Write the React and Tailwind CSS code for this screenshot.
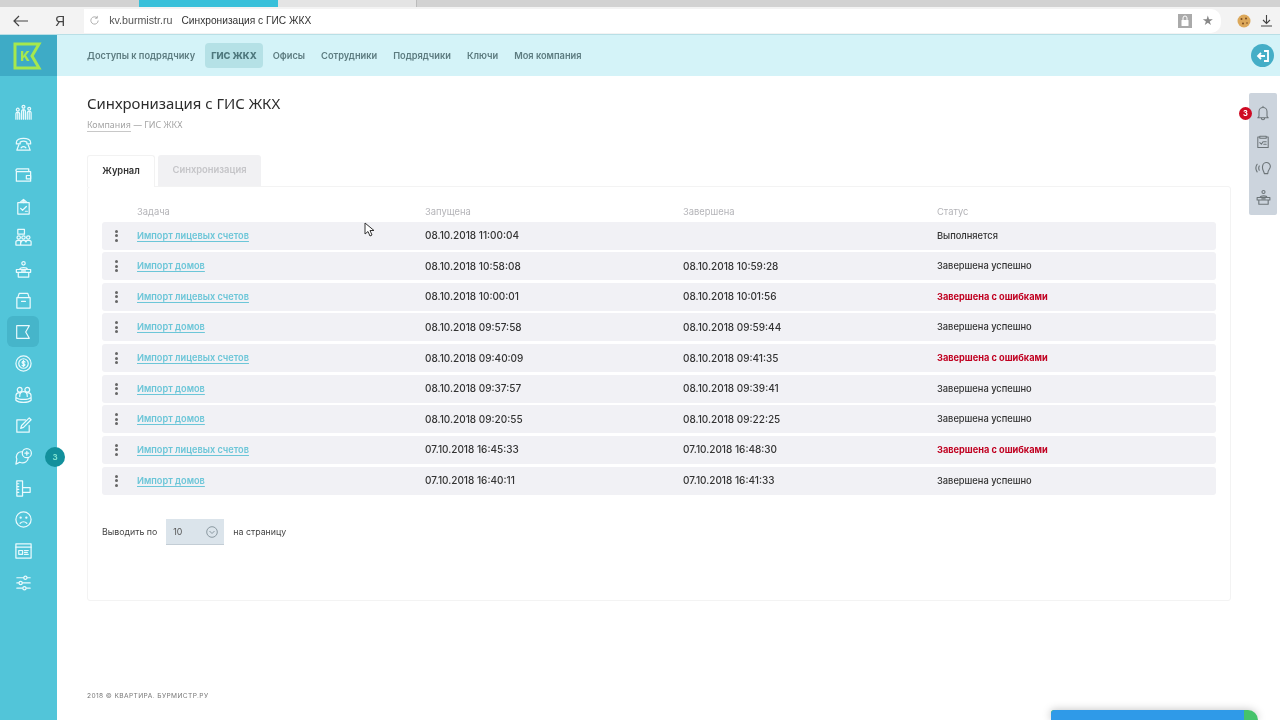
import React from "react";

const nav = ["Доступы к подрядчику", "ГИС ЖКХ", "Офисы", "Сотрудники", "Подрядчики", "Ключи", "Моя компания"];

const rows = [
  ["Импорт лицевых счетов", "08.10.2018 11:00:04", "", "Выполняется", 0],
  ["Импорт домов", "08.10.2018 10:58:08", "08.10.2018 10:59:28", "Завершена успешно", 0],
  ["Импорт лицевых счетов", "08.10.2018 10:00:01", "08.10.2018 10:01:56", "Завершена с ошибками", 1],
  ["Импорт домов", "08.10.2018 09:57:58", "08.10.2018 09:59:44", "Завершена успешно", 0],
  ["Импорт лицевых счетов", "08.10.2018 09:40:09", "08.10.2018 09:41:35", "Завершена с ошибками", 1],
  ["Импорт домов", "08.10.2018 09:37:57", "08.10.2018 09:39:41", "Завершена успешно", 0],
  ["Импорт домов", "08.10.2018 09:20:55", "08.10.2018 09:22:25", "Завершена успешно", 0],
  ["Импорт лицевых счетов", "07.10.2018 16:45:33", "07.10.2018 16:48:30", "Завершена с ошибками", 1],
  ["Импорт домов", "07.10.2018 16:40:11", "07.10.2018 16:41:33", "Завершена успешно", 0],
];

function Ico({ children, size = 20, className = "" }) {
  return (
    <svg width={size} height={size} viewBox="0 0 20 20" fill="none" stroke="currentColor" strokeWidth="1.3" strokeLinecap="round" strokeLinejoin="round" className={className}>
      {children}
    </svg>
  );
}

const sideIcons = [
  <><circle cx="4" cy="7" r="1.5"/><circle cx="10" cy="4" r="1.5"/><circle cx="16" cy="6" r="1.5"/><path d="M2 17v-5.5a2 2 0 0 1 4 0V17M8 17v-8a2 2 0 0 1 4 0v8M14 17v-6.500a2 2 0 0 1 4 0V17M4 10v7M10 8v9M16 9v8"/></>,
  <><path d="M2.500 9c0-6 15-6 15 0v1.500h-4V8.500c-2-1-5-1-7 0v2h-4z"/><path d="M5 11.500 3 17h14l-2-5.500M7.500 14.500c1.500-1.500 3.500-1.500 5 0"/></>,
  <><path d="M4 3h11.500v3M2.500 5.500A1.500 1.500 0 0 1 4 3M2.500 5.500V16h15V6h-15"/><rect x="13" y="10" width="4.500" height="3.500"/></>,
  <><path d="M6 6 10 2.500 14 6M4 6h12v12H4zM7 12l2 2 4-4M12 15h2"/><circle cx="10" cy="5" r=".8"/></>,
  <><rect x="4" y="1.500" width="7" height="5"/><circle cx="5" cy="10" r="1.800"/><circle cx="10" cy="10" r="1.800"/><circle cx="15" cy="10" r="1.800"/><path d="M2 18v-3.500c0-2 6-2 6 0M7 18v-3.500c0-2 6-2 6 0M12 14.500c0-2 6-2 6 0V18M2 18h16"/></>,
  <><circle cx="10" cy="3.500" r="1.800"/><path d="M6 10c0-2.500 8-2.500 8 0M2.500 10h15v3h-15zM4.500 13v5h11v-5M8 11.500h4"/></>,
  <><path d="M5.500 2.500h9l1.500 4.500H4zM3 7h14v11H3zM8 11h4"/></>,
  null,
  <><circle cx="10" cy="10" r="8"/><circle cx="10" cy="10" r="5"/><path d="M11.500 8.500c-.5-1-3-1-3 .5s3 .8 3 2.300-2.500 1.500-3 .5M10 6.800v6.400"/></>,
  <><circle cx="6" cy="5" r="2.500"/><circle cx="14" cy="5" r="2.500"/><path d="M2 12c0-3 1-4 4-4M18 12c0-3-1-4-4-4M6 12c0-3 1-5 4-5s4 2 4 5M2 13c3 3 13 3 16 0v3c-3 3-13 3-16 0z"/></>,
  <><path d="M16 10v7H3V4h9M7 13l1-3 8-8 2 2-8 8z"/></>,
  <><path d="M8 5C3 5 1.500 10 3 13l-1 5 4-2c5 2 9-1 9-5"/><circle cx="13.500" cy="6.500" r="4.800"/><path d="M13.500 4.500v4M11.500 6.500h4"/></>,
  <><path d="M3 2h6v16H3zM9 9h8v5H9zM3 5h2M3 8h2M3 11h2M3 14h2"/></>,
  <><circle cx="10" cy="10" r="8"/><circle cx="7" cy="8" r=".6"/><circle cx="13" cy="8" r=".6"/><path d="M6.500 14c2-2 5-2 7 0"/></>,
  <><rect x="2" y="3" width="16" height="15"/><path d="M2 6.500h16M5 10h4v4H5zM11 10h4M11 12h3M11 14h4"/></>,
  <><path d="M3 5h14M3 10.500h14M3 16h14"/><circle cx="12" cy="5" r="1.700" fill="#52c5d9"/><circle cx="7" cy="10.500" r="1.700" fill="#52c5d9"/><circle cx="11" cy="16" r="1.700" fill="#52c5d9"/></>,
];

function Sidebar() {
  return (
    <aside className="w-[57px] shrink-0 flex flex-col bg-[#52c5d9] relative">
      <div className="h-[41px] bg-[#3eabc6] flex items-center justify-center pr-[2px]">
        <svg width="30" height="28" viewBox="0 0 30 28" fill="none">
          <path d="M2 2h24l-7 12 7 12H2z" stroke="#a6e84e" strokeWidth="3" />
          <text x="12" y="19" textAnchor="middle" fontFamily="Inter, sans-serif" fontWeight="800" fontSize="13" fill="#a6e84e">K</text>
        </svg>
      </div>
      <div className="flex flex-col items-center pt-[21px] pr-[11px] text-white">
        {sideIcons.map((ic, i) =>
          ic ? (
            <div key={i} className="h-[31.3px] w-[32px] flex items-center justify-center text-[#eafafd]">
              <Ico size={19}>{ic}</Ico>
            </div>
          ) : (
            <div key={i} className="h-[31.3px] w-[32px] flex items-center justify-center rounded-md bg-[#46b5ca] text-[#eafafd]">
              <Ico size={18}><path d="M3 3h14l-4 7 4 7H3z" /></Ico>
            </div>
          )
        )}
      </div>
      <div className="absolute left-[45px] top-[412px] w-[20px] h-[20px] rounded-full bg-[#12909c] text-[#7fe3cf] text-[8px] font-bold flex items-center justify-center">3</div>
    </aside>
  );
}

function Chrome() {
  return (
    <div className="h-[35px] shrink-0 bg-[#f3f3f3] border-b border-[#b9dfe6] flex flex-col font-['Liberation_Sans',sans-serif]">
      <div className="h-[7px] bg-[#d2d2d2] flex">
        <div className="ml-[139px] w-[139px] bg-[#38c0da]" />
        <div className="w-[139px] bg-[#e4e4e4] border-r border-[#bbbbbb]" />
      </div>
      <div className="flex-1 flex items-center">
        <svg width="16" height="12" viewBox="0 0 16 12" fill="none" stroke="#444" strokeWidth="1.200" className="ml-[13px]"><path d="M15 6H1M6 1 1 6l5 5" /></svg>
        <span className="ml-[26px] text-[14px] text-[#444] leading-none">Я</span>
        <div className="ml-[19px] w-[1137px] h-[24px] bg-white rounded-r-[10px] flex items-center">
          <svg width="11" height="11" viewBox="0 0 12 12" fill="none" stroke="#aaa" strokeWidth="1" className="ml-[5px]"><path d="M10 6a4 4 0 1 1-1.200-2.900M9 1v2.500H6.500" /></svg>
          <span className="ml-[9px] text-[10.700px] text-[#555]">kv.burmistr.ru</span>
          <span className="ml-[9px] text-[10.200px] text-[#333]">Синхронизация с ГИС ЖКХ</span>
          <svg width="14" height="14" viewBox="0 0 14 14" className="ml-auto mr-[10px]">
            <rect width="14" height="14" fill="#aaaaaa" />
            <rect x="3.500" y="6" width="7" height="6" rx=".5" fill="white" />
            <path d="M5 6V4a2 2 0 0 1 4 0v2" fill="none" stroke="white" strokeWidth="1" />
          </svg>
          <span className="mr-[7px] text-[#888] text-[13px] leading-none">★</span>
        </div>
        <svg width="14" height="14" viewBox="0 0 14 14" className="ml-[16px]">
          <circle cx="7" cy="7" r="6.500" fill="#dca85a" />
          <circle cx="4.500" cy="5" r="1" fill="#7a4a1e" />
          <circle cx="9" cy="4.500" r="1" fill="#7a4a1e" />
          <circle cx="6" cy="9.500" r="1" fill="#7a4a1e" />
          <circle cx="10" cy="9" r=".8" fill="#7a4a1e" />
        </svg>
        <svg width="13" height="13" viewBox="0 0 13 13" fill="none" stroke="#444" strokeWidth="1.100" className="ml-[9px]"><path d="M6.500 1v8M3 6l3.500 3.500L10 6M1 12h11" /></svg>
      </div>
    </div>
  );
}

function SubNav() {
  return (
    <div className="h-[41px] shrink-0 bg-[#d4f3f8] flex items-center pl-[30px] text-[#5d7c80] text-[9.250px] font-semibold">
      {nav.map((n, i) =>
        i === 1 ? (
          <div key={n} className="mr-[10px] -ml-[6px] h-[25px] px-[6px] rounded bg-[#b5e1e6] flex items-center font-extrabold text-[#4d777c]">{n}</div>
        ) : (
          <span key={n} className="mr-[16px] pt-[1px]">{n}</span>
        )
      )}
      <div className="ml-auto mr-[6px] w-[23px] h-[23px] rounded-full bg-[#45aec7] flex items-center justify-center">
        <svg width="14" height="14" viewBox="0 0 14 14" fill="none" stroke="white" strokeWidth="1.800"><path d="M8 2h4v10H8M9 7H2M5 4 2 7l3 3" /></svg>
      </div>
    </div>
  );
}

function Row({ r }) {
  return (
    <div className="h-[28px] mb-[2.630px] bg-[#f1f1f5] rounded-[3px] flex items-center text-[10px] text-[#333]">
      <div className="w-[35px] flex flex-col items-center gap-[1.500px] pr-[6px]">
        <i className="block w-[3px] h-[3px] rounded-full bg-[#666]" />
        <i className="block w-[3px] h-[3px] rounded-full bg-[#666]" />
        <i className="block w-[3px] h-[3px] rounded-full bg-[#666]" />
      </div>
      <div className="w-[288px] text-[9.200px] text-[#6cc6d8] font-semibold underline underline-offset-2">{r[0]}</div>
      <div className="w-[258px] font-medium">{r[1]}</div>
      <div className="w-[254px] font-medium">{r[2]}</div>
      <div className={r[4] ? "text-[9.200px] font-bold text-[#c00020]" : "text-[9.300px] font-medium"}>{r[3]}</div>
    </div>
  );
}

function Card() {
  return (
    <div>
      <div className="flex items-end h-[32px] gap-[3px]">
        <div className="w-[68px] h-[32px] pb-[1px] bg-white border border-b-0 border-[#f2f2f2] rounded-t-[3px] flex items-center justify-center text-[9.300px] font-semibold text-[#333] relative z-10 -mb-px">Журнал</div>
        <div className="w-[103px] h-[31px] pb-[1px] bg-[#f1f1f3] rounded-t-[3px] flex items-center justify-center text-[9.400px] font-semibold text-[#c5c5c8]">Синхронизация</div>
      </div>
      <div className="w-[1144px] h-[415px] border border-[#f3f3f3] rounded-[3px] px-[14px] pt-[15px]">
        <div className="flex h-[19.500px] items-center text-[9.400px] text-[#b4b4b8]">
          <div className="w-[35px]" />
          <div className="w-[288px]">Задача</div>
          <div className="w-[258px]">Запущена</div>
          <div className="w-[254px]">Завершена</div>
          <div>Статус</div>
        </div>
        {rows.map((r, i) => <Row key={i} r={r} />)}
        <div className="flex items-center mt-[24.500px] h-[26px] text-[8.800px] text-[#444]">
          <span>Выводить по</span>
          <div className="ml-[9px] w-[58px] h-[26px] bg-[#dbe4eb] border-b border-[#c3cdd5] flex items-center pl-[7px] pr-[6px] justify-between text-[#555]">
            <span>10</span>
            <svg width="12" height="12" viewBox="0 0 12 12" fill="none" stroke="#8a98a0" strokeWidth="1"><circle cx="6" cy="6" r="5.300"/><path d="m3.500 5 2.500 2.500L8.500 5"/></svg>
          </div>
          <span className="ml-[9px]">на страницу</span>
        </div>
      </div>
    </div>
  );
}

function RightPanel() {
  return (
    <div className="absolute left-[1249px] top-[93px] w-[28px] h-[122px] bg-[#ccd4dd] rounded-[2px] flex flex-col items-center gap-[11.500px] pt-[12px] text-[#6c7478]">
      <Ico size={16}><path d="M5 14V8a5 5 0 0 1 10 0v6l1.500 2h-13zM10 3V1.500M8 16.500a2 2 0 0 0 4 0"/></Ico>
      <Ico size={16}><path d="M6 4h8v2.500H6zM6 5H3.500v13h13V5H14M6 12l2 2 2-3M11 11h3M11 14h3"/></Ico>
      <Ico size={17}><path d="M11 16c-1-4-3-5-2-9a4.500 4.500 0 0 1 9 1c0 3-3 3-3 8zM5 7c-1 2-1 3 0 5M2.500 5c-2 3-2 6 0 9"/></Ico>
      <Ico size={17}><circle cx="10" cy="3.500" r="1.800"/><path d="M6 10c0-2.500 8-2.500 8 0M2.500 10h15v3h-15zM4.500 13v5h11v-5M8 11.500h4"/></Ico>
      <div className="absolute -left-[10px] top-[14px] w-[13px] h-[13px] rounded-full bg-[#cf0a23] text-white text-[7.500px] font-bold flex items-center justify-center">3</div>
    </div>
  );
}

export default function App() {
  return (
    <div className="w-[1280px] h-[720px] overflow-hidden bg-white flex flex-col relative font-['Inter',sans-serif] blur-[0.35px]">
      <Chrome />
      <div className="flex-1 flex min-h-0">
        <Sidebar />
        <div className="flex-1 flex flex-col min-w-0">
          <SubNav />
          <main className="flex-1 pl-[30px] flex flex-col">
            <h1 className="mt-[15px] text-[14.900px] leading-[24px] text-[#2d2d2d] font-['Noto_Sans',sans-serif]">Синхронизация с ГИС ЖКХ</h1>
            <div className="mt-[3px] text-[8.900px] leading-[14px] text-[#a5a5a5] font-['Noto_Sans',sans-serif]">
              <span className="border-b border-[#c8c8c8]">Компания</span>
              <span> — ГИС ЖКХ</span>
            </div>
            <div className="mt-[22px]"><Card /></div>
            <div className="mt-[91px] text-[6.600px] tracking-[0.4px] text-[#777]">2018 © КВАРТИРА. БУРМИСТР.РУ</div>
          </main>
        </div>
      </div>
      <RightPanel />
      <svg width="12" height="16" viewBox="0 0 12 16" className="absolute left-[364px] top-[222px]" fill="white" stroke="#333" strokeWidth="1"><path d="M1 1v11l3-2.500 2 4.500 2-1-2-4.500h4z" /></svg>
      <div className="absolute left-[1051px] top-[710px] w-[207px] h-[10px] rounded-tl-[4px] rounded-tr-[14px] bg-[#45c36b] shadow-[0_0_8px_rgba(0,0,0,0.25)]">
        <div className="w-[193px] h-[10px] bg-[#2f9ae8] rounded-tl-[4px]" />
      </div>
    </div>
  );
}
